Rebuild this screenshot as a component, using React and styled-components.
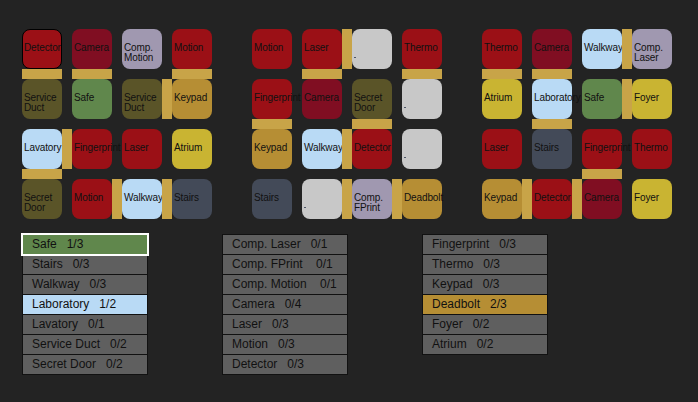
import React from "react";
import styled, { createGlobalStyle } from "styled-components";

const Global = createGlobalStyle`
  html, body { margin: 0; padding: 0; background: #232323; }
  body { font-family: "Liberation Sans", Arial, sans-serif; }
`;

const COLORS = {
  red: "#9b1016",
  crimson: "#800e22",
  purple: "#a098b0",
  olive: "#5a5428",
  green: "#60874c",
  gold: "#b68e34",
  yellow: "#c9b432",
  blue: "#b9daf5",
  slate: "#434a58",
  empty: "#c8c8c8",
  grey: "#5f5f5f",
};

const Page = styled.div`
  width: 698px;
  height: 402px;
  padding: 29px 0 0 22px;
  box-sizing: border-box;
  display: flex;
  flex-direction: column;
  gap: 15px;
`;

const Boards = styled.div`
  display: flex;
  gap: 40px;
`;

const Board = styled.div`
  display: grid;
  grid-template-columns: 40px 10px 40px 10px 40px 10px 40px;
  grid-template-rows: 40px 10px 40px 10px 40px 10px 40px;
  position: relative;
  z-index: 0;
`;

const Tile = styled.div`
  grid-row: ${(p) => p.$row};
  grid-column: ${(p) => p.$col};
  background: ${(p) => COLORS[p.$color]};
  border-radius: 8px;
  box-sizing: border-box;
  border: ${(p) => (p.$selected ? "1px solid #000" : "none")};
  padding: ${(p) => (p.$selected ? "13px 0 0 1px" : "14px 0 0 2px")};
  position: relative;
`;

const Label = styled.span`
  position: relative;
  z-index: 1;
  display: block;
  font-size: 10px;
  letter-spacing: -0.12px;
  line-height: 10px;
  color: #111;
  white-space: pre;
`;

const Dot = styled.span`
  position: absolute;
  left: 2px;
  top: 28px;
  width: 2px;
  height: 1px;
  background: #4c5566;
`;

const Link = styled.div`
  grid-row: ${(p) => p.$row};
  grid-column: ${(p) => p.$col};
  background: #c8a448;
  position: relative;
  z-index: 2;
`;

const Lists = styled.div`
  display: flex;
  gap: 74px;
  align-items: flex-start;
`;

const List = styled.div`
  width: 126px;
  box-sizing: border-box;
  border: 1px solid #111;
  display: flex;
  flex-direction: column;
`;

const Row = styled.div`
  height: 19px;
  line-height: 19px;
  font-size: 12px;
  padding-left: 9px;
  color: #111;
  white-space: pre;
  background: ${(p) => COLORS[p.$color] || COLORS.grey};
  border-top: ${(p) => (p.$first ? "none" : "1px solid #111")};
  position: relative;
  outline: ${(p) => (p.$selected ? "2px solid #fff" : "none")};
  z-index: ${(p) => (p.$selected ? 1 : 0)};
`;

const T = (label, color, extra = {}) => ({ label, color, ...extra });

const boards = [
  {
    tiles: [
      [T("Detector", "red", { selected: true }), T("Camera", "crimson"), T("Comp.\nMotion", "purple"), T("Motion", "red")],
      [T("Service\nDuct", "olive"), T("Safe", "green"), T("Service\nDuct", "olive"), T("Keypad", "gold")],
      [T("Lavatory", "blue"), T("Fingerprint", "red"), T("Laser", "red"), T("Atrium", "yellow")],
      [T("Secret\nDoor", "olive"), T("Motion", "red"), T("Walkway", "blue"), T("Stairs", "slate")],
    ],
    h: [[1, 2], [2, 0], [3, 1], [3, 2]],
    v: [[0, 0], [0, 1], [0, 3], [2, 0]],
  },
  {
    tiles: [
      [T("Motion", "red"), T("Laser", "red"), T("", "empty"), T("Thermo", "red")],
      [T("Fingerprint", "red"), T("Camera", "crimson"), T("Secret\nDoor", "olive"), T("", "empty")],
      [T("Keypad", "gold"), T("Walkway", "blue"), T("Detector", "red"), T("", "empty")],
      [T("Stairs", "slate"), T("", "empty"), T("Comp.\nFPrint", "purple"), T("Deadbolt", "gold")],
    ],
    h: [[0, 1], [2, 1], [3, 1], [3, 2]],
    v: [[0, 1], [0, 3], [1, 0], [1, 2]],
  },
  {
    tiles: [
      [T("Thermo", "red"), T("Camera", "crimson"), T("Walkway", "blue"), T("Comp.\nLaser", "purple")],
      [T("Atrium", "yellow"), T("Laboratory", "blue"), T("Safe", "green"), T("Foyer", "yellow")],
      [T("Laser", "red"), T("Stairs", "slate"), T("Fingerprint", "red"), T("Thermo", "red")],
      [T("Keypad", "gold"), T("Detector", "red"), T("Camera", "crimson"), T("Foyer", "yellow")],
    ],
    h: [[0, 2], [1, 2], [3, 0], [3, 1]],
    v: [[0, 0], [0, 1], [1, 1], [2, 2]],
  },
];

const lists = [
  [
    { text: "Safe   1/3", color: "green", selected: true },
    { text: "Stairs   0/3" },
    { text: "Walkway   0/3" },
    { text: "Laboratory   1/2", color: "blue" },
    { text: "Lavatory   0/1" },
    { text: "Service Duct   0/2" },
    { text: "Secret Door   0/2" },
  ],
  [
    { text: "Comp. Laser   0/1" },
    { text: "Comp. FPrint    0/1" },
    { text: "Comp. Motion    0/1" },
    { text: "Camera   0/4" },
    { text: "Laser   0/3" },
    { text: "Motion   0/3" },
    { text: "Detector   0/3" },
  ],
  [
    { text: "Fingerprint   0/3" },
    { text: "Thermo   0/3" },
    { text: "Keypad   0/3" },
    { text: "Deadbolt   2/3", color: "gold" },
    { text: "Foyer   0/2" },
    { text: "Atrium   0/2" },
  ],
];

function GameBoard({ board }) {
  return (
    <Board>
      {board.tiles.map((row, r) =>
        row.map((t, c) => (
          <Tile key={`t${r}-${c}`} $row={2 * r + 1} $col={2 * c + 1} $color={t.color} $selected={t.selected}>
            <Label>{t.label}</Label>
            {t.color === "empty" && <Dot />}
          </Tile>
        ))
      )}
      {board.h.map(([r, c]) => (
        <Link key={`h${r}-${c}`} $row={2 * r + 1} $col={2 * c + 2} />
      ))}
      {board.v.map(([r, c]) => (
        <Link key={`v${r}-${c}`} $row={2 * r + 2} $col={2 * c + 1} />
      ))}
    </Board>
  );
}

export default function App() {
  return (
    <>
      <Global />
      <Page>
        <Boards>
          {boards.map((b, i) => (
            <GameBoard key={i} board={b} />
          ))}
        </Boards>
        <Lists>
          {lists.map((items, i) => (
            <List key={i}>
              {items.map((it, j) => (
                <Row key={j} $first={j === 0} $color={it.color} $selected={it.selected}>
                  {it.text}
                </Row>
              ))}
            </List>
          ))}
        </Lists>
      </Page>
    </>
  );
}
